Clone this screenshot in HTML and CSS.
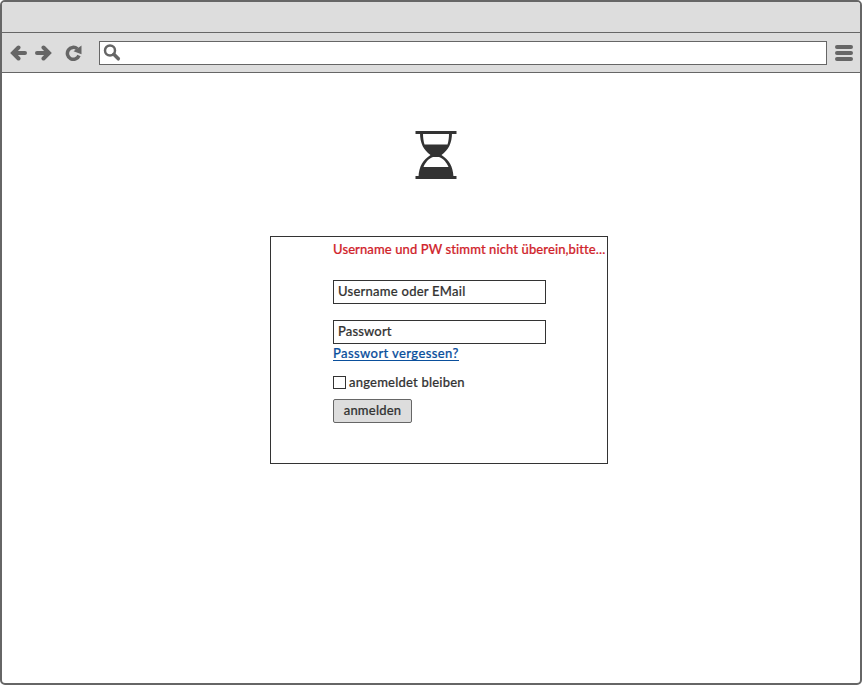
FILE: index.html
```html
<!DOCTYPE html>
<html lang="de">
<head>
<meta charset="utf-8">
<title>Anmeldung</title>
<link rel="stylesheet" href="styles.css">
</head>
<body>
<div class="browser">
  <header class="titlebar"></header>
  <nav class="toolbar">
    <svg class="icon back" width="17" height="16" viewBox="0 0 17 16"><path d="M8.500 2.500 3 8l5.500 5.500M4 8h11"/></svg>
    <svg class="icon forward" width="17" height="16" viewBox="0 0 17 16"><path d="M8.500 2.500 14 8l-5.500 5.500M13 8H2"/></svg>
    <svg class="icon reload" width="18" height="16" viewBox="0 0 18 16"><path d="M12.300 3.800A6 6 0 1 0 14 10.500"/><path class="solid" d="M16.500 0.500v8.800L8.500 6.200z"/></svg>
    <div class="address">
      <svg class="search" width="18" height="18" viewBox="0 0 18 18"><circle cx="7" cy="6.500" r="5"/><path d="m10.800 10.300 4.500 4.500"/></svg>
    </div>
    <svg class="icon menu" width="18" height="16" viewBox="0 0 18 16"><path d="M2 2h14M2 8h14M2 14h14"/></svg>
  </nav>
  <main class="page">
    <svg class="hourglass" width="42" height="50" viewBox="0 0 42 50"><path d="M.5 1h41v3H.5zM.5 46h41v3H.5z"/><path fill-rule="evenodd" d="M5 3C5 13 8.500 20 15.500 25 8 30 4 36 3.500 47h35C38 36 34 30 26.500 25 33.500 20 37 13 37 3h-3c0 5-.5 8-1.500 11.500h-23C8.500 11 8 8 8 3zM18 27h6c5 2 7.500 5.500 9.500 10h-25C10.500 32.500 13 29 18 27z"/></svg>
    <form class="login">
      <p class="error">Username und PW stimmt nicht überein,bitte...</p>
      <div class="field user"><span>Username oder EMail</span></div>
      <div class="field pass"><span>Passwort</span></div>
      <a class="forgot">Passwort vergessen?</a>
      <label class="remember"><span class="box"></span><span class="caption">angemeldet bleiben</span></label>
      <button class="submit" type="button"><span>anmelden</span></button>
    </form>
  </main>
</div>
</body>
</html>
```
FILE: styles.css
```css
* { box-sizing: border-box; }
body { margin: 0; background: #fff; color: #333; font: 500 13px/16px Lato, sans-serif; -webkit-text-stroke: 0.2px; }
.browser { height: 685px; border: 2px solid #666; border-radius: 5px; overflow: hidden; display: flex; flex-direction: column; }
.titlebar { height: 31px; background: #ddd; border-bottom: 1px solid #666; flex: none; }
.toolbar { height: 40px; background: #ddd; border-bottom: 1px solid #666; display: flex; align-items: center; padding: 0 7px 0 8px; flex: none; }
.icon { fill: none; stroke: #666; stroke-width: 4; flex: none; }
.back, .forward { stroke-linecap: round; }
.forward { margin-left: 8px; }
.reload { margin-left: 13px; }
.reload path { stroke-width: 3.5; }
.reload .solid { fill: #666; stroke: none; }
.address { flex: 1; height: 24px; margin: 1px 8px 0 16px; padding: 2px 3px; background: #fff; border: 1px solid #666; }
.search { display: block; fill: none; stroke: #666; stroke-width: 2.5; }
.search path { stroke-width: 3.500; stroke-linecap: round; }
.menu { stroke-linecap: round; }
.page { flex: 1; }
.hourglass { display: block; margin: 57px 0 0 413px; fill: #333; }
.login { width: 338px; height: 228px; margin: 56px 0 0 268px; padding: 4px 0 0 62px; border: 1px solid #333; display: flex; flex-direction: column; align-items: flex-start; }
.error { margin: 0; height: 16px; color: #d0232b; white-space: nowrap; letter-spacing: 0.1px; }
.field { width: 213px; height: 24px; padding: 2px 4px; border: 1px solid #333; }
.user { margin-top: 23px; letter-spacing: 0.25px; }
.pass { margin-top: 16px; letter-spacing: 0.15px; }
.forgot { margin-top: 1px; height: 16px; color: #0a4f9c; border-bottom: 1px solid #0a4f9c; letter-spacing: 0.4px; }
.remember { display: flex; align-items: center; gap: 3px; height: 16px; margin-top: 13px; letter-spacing: 0.2px; }
.box { width: 13px; height: 13px; border: 1px solid #333; }
.submit { width: 79px; height: 24px; margin-top: 9px; padding: 0 0 2px; background: #ddd; border: 1px solid #666; border-radius: 2px; color: #333; font: inherit; letter-spacing: 0.2px; -webkit-text-stroke: 0.2px; }
```
